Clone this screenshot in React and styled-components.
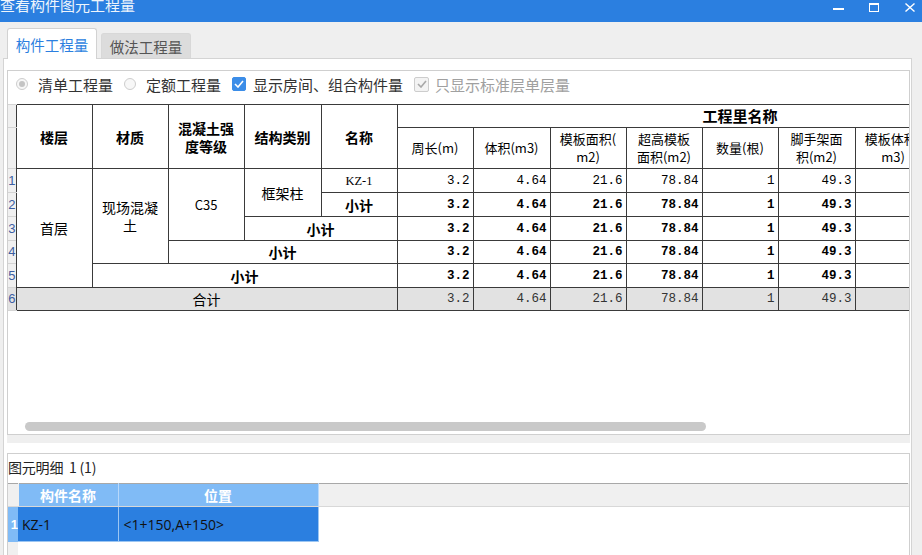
import styled, { createGlobalStyle } from 'styled-components'

const GlobalStyle = createGlobalStyle`
  html, body {
    margin: 0;
    padding: 0;
    background: #efefef;
  }
  body {
    font-family: "Noto Sans CJK SC", "Noto Sans", sans-serif;
    color: #222;
  }
`

const Window = styled.div`
  width: 922px;
  height: 555px;
  overflow: hidden;
  display: flex;
  flex-direction: column;
  background: #efefef;
`

const TitleBar = styled.div`
  flex: none;
  height: 22px;
  background: #2b7fe0;
  color: #fff;
  display: flex;
  align-items: flex-start;
  justify-content: space-between;
  overflow: hidden;
`

const Title = styled.div`
  font-size: 15px;
  line-height: 15px;
  margin-top: -3px;
  opacity: 0.92;
`

const Controls = styled.div`
  display: flex;
  gap: 24px;
  padding: 2px 6px 0 0;
`

const CtrlBtn = styled.span`
  width: 12px;
  height: 10px;
  display: flex;
  align-items: center;
  justify-content: center;
`

const Body = styled.div`
  flex: 1;
  width: 909px;
  padding-left: 3px;
  display: flex;
  flex-direction: column;
  min-height: 0;
`

const TabStrip = styled.div`
  flex: none;
  height: 37px;
  margin-bottom: -1px;
  padding-left: 4px;
  display: flex;
  align-items: flex-end;
  gap: 4px;
  position: relative;
  z-index: 1;
`

const Tab = styled.div`
  width: 90px;
  box-sizing: border-box;
  height: ${p => (p.$active ? '31px' : '25px')};
  margin-bottom: ${p => (p.$active ? '0' : '1px')};
  background: ${p => (p.$active ? '#fff' : '#dcdcdc')};
  border: 1px solid ${p => (p.$active ? '#d2d2d2' : '#d8d8d8')};
  border-bottom: none;
  border-radius: 3px 3px 0 0;
  color: ${p => (p.$active ? '#2b7fe0' : '#555')};
  font-size: 14.5px;
  display: flex;
  align-items: center;
  justify-content: center;
`

const TabBody = styled.div`
  flex: 1;
  min-height: 0;
  background: #fff;
  border: 1px solid #d4d4d4;
  border-bottom: none;
  padding: 11px 1px 0 3px;
  display: flex;
  flex-direction: column;
`

const QtyFrame = styled.div`
  flex: none;
  height: 365px;
  box-sizing: border-box;
  border: 1px solid #cfcfcf;
  display: flex;
  flex-direction: column;
  overflow: hidden;
`

const Options = styled.div`
  flex: none;
  height: 26px;
  margin-bottom: 7px;
  padding-left: 8px;
  display: flex;
  align-items: center;
  gap: 11px;
  font-size: 15px;
`

const Option = styled.label`
  display: flex;
  align-items: center;
  gap: ${p => p.$gap || 10}px;
  color: ${p => (p.$disabled ? '#a0a0a0' : '#333')};
`

const Radio = styled.span`
  width: 12px;
  height: 12px;
  box-sizing: border-box;
  border-radius: 50%;
  border: 1px solid #cdcdcd;
  background: #f7f7f7;
  display: flex;
  align-items: center;
  justify-content: center;

  &::after {
    content: '';
    width: 6px;
    height: 6px;
    border-radius: 50%;
    background: ${p => (p.$checked ? '#c4c4c4' : 'transparent')};
  }
`

const Check = styled.span`
  width: ${p => (p.$disabled ? 15 : 14)}px;
  height: ${p => (p.$disabled ? 15 : 14)}px;
  box-sizing: border-box;
  border-radius: 2px;
  border: 1px solid ${p => (p.$disabled ? '#cdcdcd' : '#3b8de8')};
  background: ${p => (p.$disabled ? '#f3f3f3' : '#3b8de8')};
  display: flex;
  align-items: center;
  justify-content: center;
`

const GridArea = styled.div`
  flex: 1;
  min-height: 0;
  overflow: hidden;
`

const Grid = styled.table`
  border-collapse: collapse;
  table-layout: fixed;
  width: 1074px;
  color: #000;

  td {
    border: 1px solid #3a3a3a;
    padding: 0;
    text-align: center;
    vertical-align: middle;
    white-space: nowrap;
    overflow: hidden;
    font-size: 14px;
    line-height: 18px;
  }
`

const RowHead = styled.td`
  && {
    background: ${p => (p.$total ? '#e2e2e2' : '#f0f0f0')};
    border-top: 1px solid #d4d4d4;
    border-bottom: 1px solid #d4d4d4;
    border-left: none;
    border-right: none;
    color: #3d5ea2;
    font-family: "Liberation Sans", sans-serif;
    font-size: 13px;
    text-align: right;
  }
`

const HeadCell = styled.td`
  && {
    font-weight: ${p => (p.$bold ? 700 : 400)};
    font-size: ${p => (p.$size || 14)}px;
    line-height: 18px;
  }
`

const TextCell = styled.td`
  && {
    font-weight: ${p => (p.$bold ? 700 : 400)};
    background: ${p => (p.$total ? '#e2e2e2' : '#fff')};
    font-size: ${p => (p.$size || 14)}px;
    font-family: ${p => (p.$serif ? '"Liberation Serif", "Noto Sans CJK SC", serif' : 'inherit')};
  }
`

const NumCell = styled.td`
  && {
    text-align: right;
    padding-right: 3px;
    font-family: "Liberation Mono", monospace;
    font-size: 12.5px;
    font-weight: ${p => (p.$bold ? 700 : 400)};
    background: ${p => (p.$total ? '#e2e2e2' : '#fff')};
    color: ${p => (p.$total ? '#333' : '#000')};
  }
`

const ScrollTrack = styled.div`
  flex: none;
  height: 9px;
  padding-left: 17px;
  margin-bottom: 3px;
`

const ScrollThumb = styled.div`
  width: 681px;
  height: 9px;
  border-radius: 5px;
  background: #c9c9c9;
`

const Splitter = styled.div`
  flex: none;
  height: 8px;
  background: #efefef;
  margin-bottom: 10px;
`

const DetailPanel = styled.div`
  flex: 1;
  min-height: 0;
  border: 1px solid #cfcfcf;
  border-bottom: none;
  display: flex;
  flex-direction: column;
  overflow: hidden;
`

const DetailTitle = styled.div`
  flex: none;
  height: 29px;
  display: flex;
  align-items: center;
  padding-bottom: 3px;
  box-sizing: border-box;
  font-size: 14px;
  color: #222;
  letter-spacing: -0.2px;
`

const DetailGrid = styled.table`
  border-collapse: collapse;
  table-layout: fixed;
  width: 100%;
  border-top: 1px solid #a8a8a8;

  td {
    padding: 0;
    white-space: nowrap;
    overflow: hidden;
    font-size: 14px;
  }
`

const DHead = styled.td`
  && {
    height: 22px;
    background: ${p => (p.$blue ? '#80bbf6' : '#f0f0f0')};
    color: #fff;
    font-weight: 700;
    text-align: center;
    border-right: 1px solid ${p => (p.$blue ? '#b8d8fa' : '#f0f0f0')};
    border-bottom: 1px solid #d8d8d8;
  }
`

const DRowHead = styled.td`
  && {
    background: ${p => (p.$selected ? '#80bbf6' : '#f0f0f0')};
    color: #fff;
    font-weight: 700;
    font-family: "Liberation Sans", sans-serif;
    font-size: 13px;
    text-align: right;
  }
`

const DCell = styled.td`
  && {
    height: 34px;
    background: ${p => (p.$selected ? '#2b7fe0' : '#fff')};
    color: #111;
    padding-left: ${p => p.$pad || 4}px;
    border-right: 1px solid ${p => (p.$selected ? '#9cc6f2' : '#fff')};
    border-bottom: 1px solid ${p => (p.$selected ? '#9cc6f2' : '#fff')};
    font-family: "Open Sans", "Noto Sans CJK SC", sans-serif;
  }
`

const CheckMark = ({ color }) => (
  <svg width="10" height="8" viewBox="0 0 10 8">
    <path d="M1 4 L4 7 L9 1" fill="none" stroke={color} strokeWidth="1.6" />
  </svg>
)

const colWidths = [8, 76, 76, 76, 77, 76, 76, 77, 76, 76, 76, 77, 76, 76, 76]

const rowHeights = [24, 24, 24, 23, 24, 23]
const nums = ['3.2', '4.64', '21.6', '78.84', '1', '49.3']

function Nums({ bold, total }) {
  return (
    <>
      {nums.map((n, i) => (
        <NumCell key={i} $bold={bold} $total={total}>{n}</NumCell>
      ))}
      <NumCell $total={total} />
      <NumCell $total={total} />
      <NumCell $total={total} />
    </>
  )
}

export default function App() {
  return (
    <Window>
      <GlobalStyle />
      <TitleBar>
        <Title>查看构件图元工程量</Title>
        <Controls>
          <CtrlBtn>
            <svg width="11" height="10" viewBox="0 0 11 10">
              <rect x="0" y="6" width="11" height="2" fill="#fff" />
            </svg>
          </CtrlBtn>
          <CtrlBtn>
            <svg width="10" height="9" viewBox="0 0 10 9">
              <rect x="0.5" y="0.5" width="9" height="8" fill="none" stroke="#fff" />
              <rect x="0" y="0" width="10" height="2" fill="#fff" />
            </svg>
          </CtrlBtn>
          <CtrlBtn>
            <svg width="10" height="9" viewBox="0 0 10 9">
              <path d="M0.5 0.5 L9.5 8.5 M9.5 0.5 L0.5 8.5" stroke="#fff" strokeWidth="1.4" />
            </svg>
          </CtrlBtn>
        </Controls>
      </TitleBar>

      <Body>
        <TabStrip>
          <Tab $active>构件工程量</Tab>
          <Tab>做法工程量</Tab>
        </TabStrip>

        <TabBody>
          <QtyFrame>
            <Options>
              <Option>
                <Radio $checked />
                清单工程量
              </Option>
              <Option>
                <Radio />
                定额工程量
              </Option>
              <Option $gap={7}>
                <Check>
                  <CheckMark color="#fff" />
                </Check>
                显示房间、组合构件量
              </Option>
              <Option $gap={6} $disabled>
                <Check $disabled>
                  <CheckMark color="#a8a8a8" />
                </Check>
                只显示标准层单层量
              </Option>
            </Options>

            <GridArea>
              <Grid>
                <colgroup>
                  {colWidths.map((w, i) => (
                    <col key={i} style={{ width: w }} />
                  ))}
                </colgroup>
                <tbody>
                  <tr style={{ height: 23 }}>
                    <RowHead />
                    <HeadCell rowSpan={2} $bold>楼层</HeadCell>
                    <HeadCell rowSpan={2} $bold>材质</HeadCell>
                    <HeadCell rowSpan={2} $bold>混凝土强<br />度等级</HeadCell>
                    <HeadCell rowSpan={2} $bold>结构类别</HeadCell>
                    <HeadCell rowSpan={2} $bold>名称</HeadCell>
                    <HeadCell colSpan={9} $bold $size={15}>工程里名称</HeadCell>
                  </tr>
                  <tr style={{ height: 41 }}>
                    <RowHead />
                    <HeadCell $size={13}>周长(m)</HeadCell>
                    <HeadCell $size={13}>体积(m3)</HeadCell>
                    <HeadCell $size={13}>模板面积(<br />m2)</HeadCell>
                    <HeadCell $size={13}>超高模板<br />面积(m2)</HeadCell>
                    <HeadCell $size={13}>数量(根)</HeadCell>
                    <HeadCell $size={13}>脚手架面<br />积(m2)</HeadCell>
                    <HeadCell $size={13}>模板体积(<br />m3)</HeadCell>
                    <HeadCell $size={13}>超高模板<br />体积(m3)</HeadCell>
                    <HeadCell $size={13}>脚手架长<br />度(m)</HeadCell>
                  </tr>

                  <tr style={{ height: rowHeights[0] }}>
                    <RowHead>1</RowHead>
                    <TextCell rowSpan={5}>首层</TextCell>
                    <TextCell rowSpan={4}>现场混凝<br />土</TextCell>
                    <TextCell rowSpan={3} $size={13}>C35</TextCell>
                    <TextCell rowSpan={2}>框架柱</TextCell>
                    <TextCell $serif $size={12.5}>KZ-1</TextCell>
                    <Nums />
                  </tr>
                  <tr style={{ height: rowHeights[1] }}>
                    <RowHead>2</RowHead>
                    <TextCell $bold>小计</TextCell>
                    <Nums bold />
                  </tr>
                  <tr style={{ height: rowHeights[2] }}>
                    <RowHead>3</RowHead>
                    <TextCell colSpan={2} $bold>小计</TextCell>
                    <Nums bold />
                  </tr>
                  <tr style={{ height: rowHeights[3] }}>
                    <RowHead>4</RowHead>
                    <TextCell colSpan={3} $bold>小计</TextCell>
                    <Nums bold />
                  </tr>
                  <tr style={{ height: rowHeights[4] }}>
                    <RowHead>5</RowHead>
                    <TextCell colSpan={4} $bold>小计</TextCell>
                    <Nums bold />
                  </tr>
                  <tr style={{ height: rowHeights[5] }}>
                    <RowHead $total>6</RowHead>
                    <TextCell colSpan={5} $total>合计</TextCell>
                    <Nums total />
                  </tr>
                </tbody>
              </Grid>
            </GridArea>

            <ScrollTrack>
              <ScrollThumb />
            </ScrollTrack>
          </QtyFrame>

          <Splitter />

          <DetailPanel>
            <DetailTitle>图元明细&nbsp;&nbsp;1 (1)</DetailTitle>
            <DetailGrid>
              <colgroup>
                <col style={{ width: 10 }} />
                <col style={{ width: 100 }} />
                <col style={{ width: 200 }} />
                <col />
              </colgroup>
              <tbody>
                <tr>
                  <DHead />
                  <DHead $blue>构件名称</DHead>
                  <DHead $blue>位置</DHead>
                  <DHead />
                </tr>
                <tr>
                  <DRowHead $selected>1</DRowHead>
                  <DCell $selected>KZ-1</DCell>
                  <DCell $selected $pad={5}>&lt;1+150,A+150&gt;</DCell>
                  <DCell />
                </tr>
                <tr>
                  <DRowHead />
                  <DCell />
                  <DCell />
                  <DCell />
                </tr>
              </tbody>
            </DetailGrid>
          </DetailPanel>
        </TabBody>
      </Body>
    </Window>
  )
}
